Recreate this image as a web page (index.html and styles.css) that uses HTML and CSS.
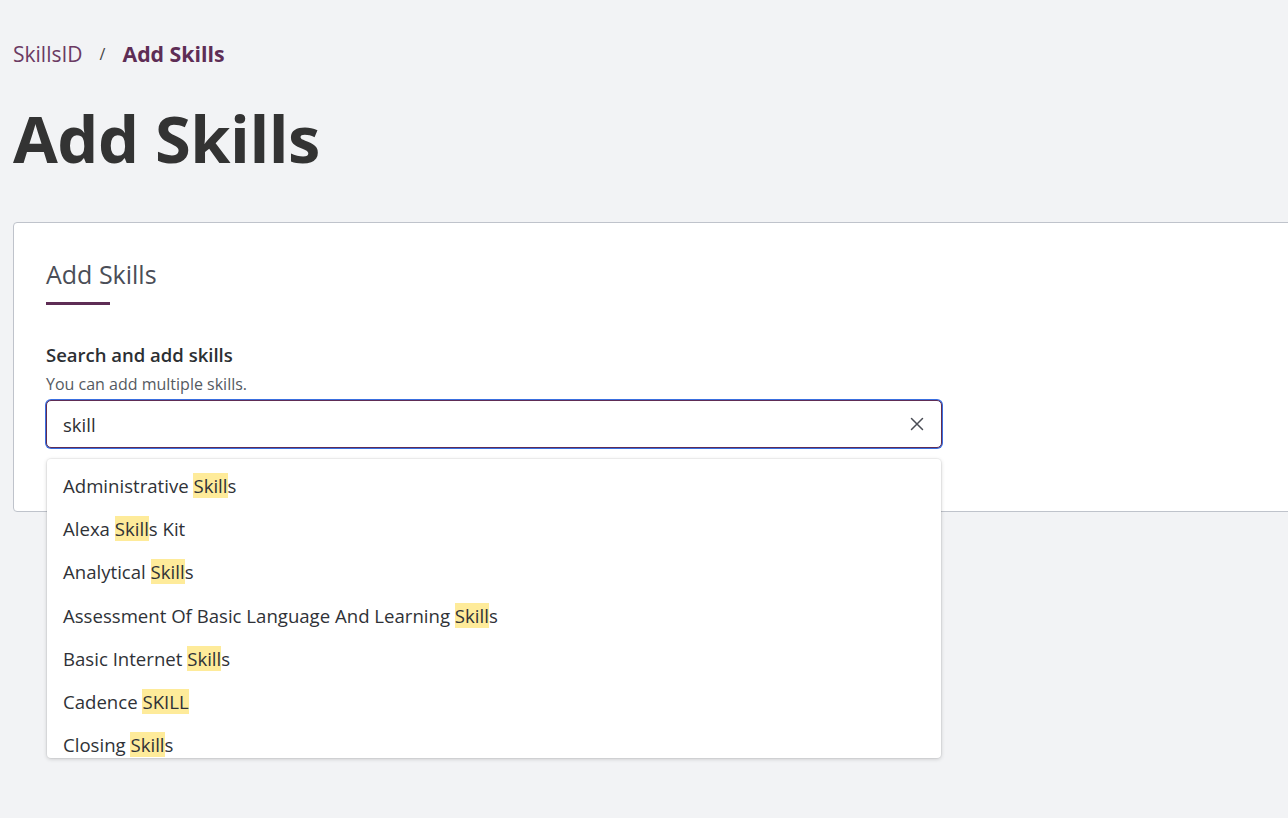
FILE: index.html
```html
<!DOCTYPE html>
<html lang="en">
<head>
<meta charset="utf-8">
<title>Add Skills</title>
<link rel="stylesheet" href="styles.css">
</head>
<body>
<div class="page">
  <nav class="breadcrumb">
    <a class="crumb-link" href="#">SkillsID</a>
    <span class="crumb-sep">/</span>
    <span class="crumb-current">Add Skills</span>
  </nav>
  <h1 class="page-title">Add Skills</h1>
  <section class="card">
    <h2 class="card-title">Add Skills</h2>
    <div class="card-rule"></div>
    <div class="field">
      <label class="field-label">Search and add skills</label>
      <div class="field-help">You can add multiple skills.</div>
      <div class="combo">
        <div class="input">
          <span class="input-value">skill</span>
          <svg class="clear" width="14" height="14" viewBox="0 0 14 14"><path d="M1.5 1.5 L12.5 12.5 M12.5 1.5 L1.5 12.5" stroke="#4a4d55" stroke-width="1.5" fill="none" stroke-linecap="round"/></svg>
        </div>
        <ul class="menu">
          <li class="option">Administrative <mark>Skill</mark>s</li>
          <li class="option">Alexa <mark>Skill</mark>s Kit</li>
          <li class="option">Analytical <mark>Skill</mark>s</li>
          <li class="option">Assessment Of Basic Language And Learning <mark>Skill</mark>s</li>
          <li class="option">Basic Internet <mark>Skill</mark>s</li>
          <li class="option">Cadence <mark>SKILL</mark></li>
          <li class="option">Closing <mark>Skill</mark>s</li>
        </ul>
      </div>
    </div>
  </section>
</div>
</body>
</html>
```
FILE: styles.css
```css
html {
  overflow: hidden;
}
body {
  margin: 0;
  padding: 0;
  min-height: 818px;
  background: #f2f3f5;
  font-family: "Open Sans", "Noto Sans", sans-serif;
  color: #333;
}
.page {
  padding: 38px 0 0 13px;
}
.breadcrumb {
  display: flex;
  align-items: center;
  gap: 17px;
  font-size: 21px;
  line-height: 32px;
}
.crumb-link {
  color: #6b3a63;
  text-decoration: none;
}
.crumb-sep {
  color: #444;
  font-size: 16px;
}
.crumb-current {
  color: #5e2d55;
  font-weight: 700;
  font-size: 21.3px;
}
.page-title {
  margin: 18px 0 0 0;
  font-size: 65px;
  line-height: 100px;
  font-weight: 700;
  color: #333;
  letter-spacing: -0.5px;
}
.card {
  margin-top: 34px;
  width: 1320px;
  height: 290px;
  box-sizing: border-box;
  background: #fff;
  border: 1px solid #bfc3cb;
  border-radius: 4px;
  padding: 35px 32px 0 32px;
}
.card-title {
  margin: 0;
  font-size: 25px;
  line-height: 32px;
  font-weight: 400;
  color: #4a4e57;
}
.card-rule {
  width: 64px;
  height: 3px;
  background: #5e2d55;
  margin-top: 12px;
}
.field {
  margin-top: 38px;
}
.field-label {
  display: block;
  font-size: 18.5px;
  line-height: 24px;
  font-weight: 600;
  color: #2c2f33;
}
.field-help {
  font-size: 16px;
  line-height: 20px;
  color: #555a62;
  margin-top: 7px;
}
.combo {
  position: relative;
  width: 896px;
  margin-top: 6px;
}
.input {
  height: 48px;
  box-sizing: border-box;
  border: 1px solid #5e2d55;
  box-shadow: 0 0 0 1px #3a6fe0;
  border-radius: 5px;
  display: flex;
  align-items: center;
  justify-content: space-between;
  padding: 0 16px 0 16px;
  background: #fff;
}
.input-value {
  font-size: 18.5px;
  color: #2c2f33;
}
.clear {
  display: block;
  margin-right: 1px;
}
.menu {
  position: absolute;
  top: 59px;
  left: 1px;
  width: 894px;
  height: 299px;
  margin: 0;
  padding: 5px 0 0 0;
  list-style: none;
  background: #fff;
  border-radius: 4px;
  box-shadow: 0 1px 4px rgba(0,0,0,0.18), 0 0 0 1px rgba(0,0,0,0.04);
  overflow: hidden;
  box-sizing: border-box;
}
.option {
  height: 43.2px;
  display: flex;
  align-items: center;
  padding-left: 16px;
  font-size: 18.6px;
  color: #2f3237;
  white-space: pre;
}
mark {
  background: #feeb9a;
  color: inherit;
  padding: 0;
  line-height: 25px;
}
```
